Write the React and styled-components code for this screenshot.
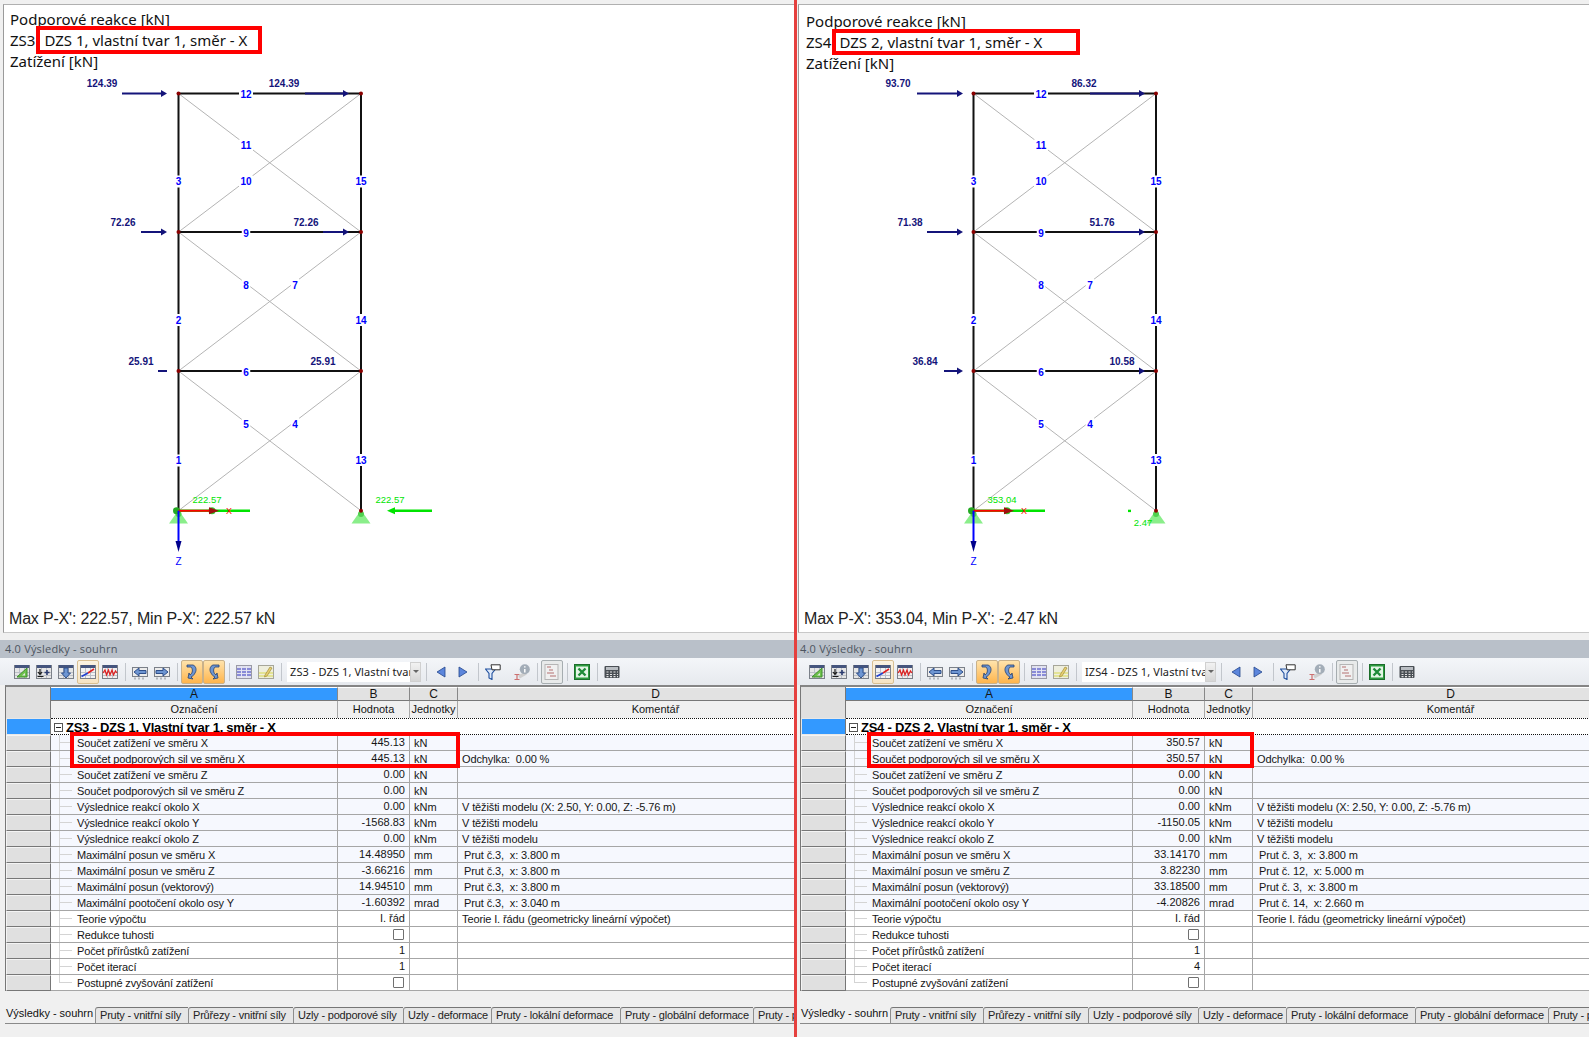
import React from 'react';
import styled, { createGlobalStyle } from 'styled-components';

const Global = createGlobalStyle`
  html, body { margin: 0; padding: 0; background: #f0f0f0; }
  body { font-family: "Liberation Sans", Arial, sans-serif; color: #111; }
`;

const Page = styled.div`
  display: flex; width: 1589px; height: 1037px; overflow: hidden; background: #f0f0f0;
`;
const Panel = styled.section`
  position: relative; flex: none; width: 795px; height: 1037px; display: flex; flex-direction: column;
  background: #f0f0f0; overflow: visible;
`;
const PanelClip = styled.div`
  width: 100%; height: 100%; overflow: hidden; display: flex; flex-direction: column;
`;
const Divider = styled.div`
  position: absolute; left: -1px; top: 0; bottom: 0; width: 3px; background: #e5403e; z-index: 5;
`;
const Highlight = styled.div`
  position: absolute; box-sizing: border-box; border: 4px solid #ff0000; z-index: 4;
  left: ${p => p.$x}px; top: ${p => p.$y}px; width: ${p => p.$w}px; height: ${p => p.$h}px;
`;
const Viewport = styled.div`
  flex: none; box-sizing: border-box; height: 629px; margin: 4px 0 0 3px;
  background: #fff; border-left: 1px solid #9a9a9a; border-top: 1px solid #b0b0b0; border-bottom: 1px solid #c8c8c8;
  display: flex; flex-direction: column;
`;
const Heading = styled.div`
  flex: none; height: 69px; box-sizing: border-box; padding: ${p => p.$top}px 0 0 ${p => p.$left}px;
  font: 15px/21px "Noto Sans", "Open Sans", sans-serif; color: #111;
`;
const HeadingLine = styled.div`
  white-space: nowrap; display: flex; gap: ${p => p.$gap || 0}px;
`;
const Chart = styled.svg`
  display: block; flex: none; width: 791px; height: 530px;
`;
const Footnote = styled.div`
  flex: 1; padding-left: 5px; font: 16px/29px "Liberation Sans", Arial, sans-serif; color: #222;
  white-space: nowrap; letter-spacing: -0.18px;
`;
const TitleBar = styled.div`
  flex: none; height: 18px; margin-top: 7px; background: #b9c0c9; padding-left: 5px;
  font: 11px/18px "Open Sans", "Noto Sans", sans-serif; color: #4d5560; letter-spacing: 0.2px;
`;
const Toolbar = styled.div`
  flex: none; height: 27px; box-sizing: border-box; padding-left: 11px; display: flex; align-items: center;
  background: linear-gradient(#f4f6f9, #e6e9ee);
`;
const ToolButton = styled.div`
  flex: none; width: 22px; height: 24px; box-sizing: border-box; display: flex; align-items: center; justify-content: center;
  border-radius: 2px; margin-left: ${p => p.$gap || 0}px;
  ${p => p.$mode === 'active' && `background: linear-gradient(#ffe3ac, #ffb54c); border: 1px solid #c9b18a;`}
  ${p => p.$mode === 'soft' && `background: linear-gradient(#fbf3e2, #f6e4c4); border: 1px solid #d8bf92;`}
  ${p => p.$mode === 'pressed' && `background: #e8eaea; border: 1px solid #a6adb0;`}
  svg { display: block; }
`;
const ToolSep = styled.div`
  flex: none; width: 8px; height: 18px; display: flex; justify-content: center;
  &::before { content: ""; width: 1px; background: #c2c6cc; }
`;
const Combo = styled.div`
  flex: none; width: 134px; height: 20px; box-sizing: border-box; margin: 0 1px 0 2px; display: flex; background: #fff;
  font: 11px/20px "Noto Sans", "Open Sans", sans-serif; letter-spacing: 0.1px; color: #222;
`;
const ComboText = styled.div`
  flex: 1; overflow: hidden; white-space: nowrap; padding-left: 3px;
`;
const ComboArrow = styled.div`
  flex: none; width: 11px; display: flex; align-items: center; justify-content: center;
  background: linear-gradient(#f2f2f2, #d6d6d6); border: 1px solid #d0d0d0; box-sizing: border-box;
  &::after { content: ""; border-left: 3px solid transparent; border-right: 3px solid transparent; border-top: 3px solid #666; }
`;

const columns = '45px 287px 72px 48px 396px';
const Table = styled.div`
  flex: none; width: 849px; margin-left: 5px; border-left: 1px solid #777; border-top: 2px solid #858585;
  background: #fff; font: 11px/15px "Liberation Sans", Arial, sans-serif; color: #151515;
`;
const HeadGrid = styled.div`
  display: grid; grid-template-columns: ${columns}; grid-template-rows: 14px 17px; background: #f0f0f0;
`;
const Corner = styled.div`
  grid-row: span 2; background: #e0e0e0; border-right: 1px solid #777; box-sizing: border-box;
`;
const ColLetter = styled.div`
  box-sizing: border-box; text-align: center; font-size: 12px; line-height: 13px; height: 14px;
  background: ${p => (p.$selected ? '#3399ff' : '#e2e2e2')};
  border-right: 1px solid #888; border-bottom: 1px solid #777; border-top: 1px solid #fff;
`;
const ColName = styled.div`
  box-sizing: border-box; text-align: center; line-height: 16px; background: #f0f0f0; white-space: nowrap; overflow: hidden;
  border-right: 1px solid #a8a8a8;
`;
const GroupRow = styled.div`
  display: grid; grid-template-columns: 45px 1fr; height: 17px; background: #fff;
`;
const GroupHead = styled.div`
  background: #3399ff; border: 1px solid #e8e8e8; border-right: 1px solid #777; box-sizing: border-box;
`;
const GroupBody = styled.div`
  display: flex; align-items: center; gap: 3px; padding: 1px 0 0 3px; box-sizing: border-box;
  border-top: 1px dotted #111; border-bottom: 1px dotted #111; letter-spacing: -0.25px;
  font: bold 13px/15px "Liberation Sans", Arial, sans-serif; white-space: nowrap; color: #000; overflow: hidden;
`;
const Minus = styled.span`
  flex: none; width: 9px; height: 9px; border: 1px solid #555; box-sizing: border-box; background: #fff; display: flex; align-items: center; justify-content: center;
  &::before { content: ""; width: 5px; height: 1px; background: #222; }
`;
const Row = styled.div`
  display: grid; grid-template-columns: ${columns}; height: 16px; box-sizing: border-box;
  background: ${p => (p.$tint ? '#f6f8fe' : '#fff')}; border-bottom: 1px solid #a6a6a6; white-space: pre;
`;
const RowHead = styled.div`
  background: #e0e0e0; border-top: 1px solid #f4f4f4; border-right: 1px solid #777; border-left: 1px solid #f4f4f4;
  border-bottom: 1px solid #777; box-sizing: border-box; height: 16px;
`;
const NameCell = styled.div`
  display: flex; border-right: 1px solid #a6a6a6; overflow: hidden; line-height: 16px; letter-spacing: -0.14px;
`;
const TreeGuide = styled.span`
  flex: none; width: 13px; margin: 0 5px 0 8px; height: 15px;
  background:
    linear-gradient(#d4d4d4, #d4d4d4) left top / 1px ${p => (p.$last ? '8px' : '100%')} no-repeat,
    linear-gradient(#d4d4d4, #d4d4d4) left 7px / 100% 1px no-repeat;
`;
const ValueCell = styled.div`
  display: flex; align-items: center; justify-content: flex-end; padding-right: 4px; border-right: 1px solid #a6a6a6; height: 15px;
`;
const UnitCell = styled.div`
  padding-left: 4px; border-right: 1px solid #a6a6a6; height: 15px; line-height: 16px;
`;
const NoteCell = styled.div`
  padding-left: ${p => p.$indent}px; overflow: hidden; line-height: 16px; letter-spacing: -0.12px;
`;
const Check = styled.span`
  width: 11px; height: 11px; box-sizing: border-box; border: 1px solid #707070; background: #fff; border-radius: 1px; margin-right: 1px;
`;
const TabStrip = styled.div`
  flex: none; margin: 14px 0 0 5px; height: 19px; display: flex; align-items: flex-end; white-space: nowrap; overflow: hidden;
`;
const Tab = styled.div`
  flex: none; box-sizing: border-box; width: ${p => p.$w}px; overflow: hidden; text-align: left;
  font: 11px/15px "Liberation Sans", Arial, sans-serif; letter-spacing: -0.2px; color: #222;
  ${p => p.$active
    ? `height: 19px; background: #f0f0f0; border-bottom: 1px solid #8a8a8a; padding: 0 0 0 1px; line-height: 16px; color:#111; letter-spacing: -0.02px;`
    : `height: 17px; background: #e6e6e6; border-top: 1px solid #777; border-left: 1px solid #8d8d8d; border-bottom: 1px solid #8a8a8a; padding-left: 4px; border-top-left-radius: 3px;`}
`;

const Sheet = ({ bg = '#e6e6e6', children }) => (
  <>
    <rect x="0.5" y="1.5" width="15" height="13" fill={bg} stroke="#7b8089" />
    <rect x="1" y="1" width="14" height="3" fill="#45557e" />
    <path d="M1 8.5h14M1 11.5h14M5.5 4v10M10.5 4v10" stroke="#bcc0c8" strokeWidth="1" fill="none" />
    {children}
  </>
);

const icons = {
  triangle: <Sheet><path d="M3 13 13 4v9z" fill="#6fc24c" stroke="#3f8f2c" /><path d="M8 11.5h3V9z" fill="#e6e6e6" /></Sheet>,
  insert: <Sheet><path d="M4 5v5M2 8l2 2.5L6 8" stroke="#1a1a1a" fill="none" strokeWidth="1.2" /><path d="M1.5 12.5h6" stroke="#1a1a1a" /><path d="M11 6v5M8.5 8.5h5" stroke="#2c3c70" strokeWidth="1.6" /></Sheet>,
  down: <Sheet><path d="M6 4h4v5h2.5L8 14 3.5 9H6z" fill="#6d95d2" stroke="#2f4f8a" /></Sheet>,
  ramp: <Sheet bg="#f2f2f2"><path d="M1.5 12.5 8 9" stroke="#2040d0" strokeWidth="1.6" /><path d="M8 9l6-4" stroke="#e02020" strokeWidth="1.6" /></Sheet>,
  wave: <Sheet bg="#f2eeee"><path d="M1 9l2-3 1.5 5L6.5 6 8 11l2-5 1.5 5 2-4 1.5 2" stroke="#e02020" fill="none" strokeWidth="1.2" /></Sheet>,
  left: <><rect x="0.5" y="3.5" width="15" height="9" fill="#ececec" stroke="#7b8089" /><path d="M3 13.5v2M7 13.5v2M11 13.5v2" stroke="#7b8089" /><path d="M2 8l5-4v2.5h7v3H7V12z" fill="#6d95d2" stroke="#2f4f8a" /></>,
  right: <><rect x="0.5" y="3.5" width="15" height="9" fill="#ececec" stroke="#7b8089" /><path d="M3 13.5v2M7 13.5v2M11 13.5v2" stroke="#7b8089" /><path d="M14 8 9 4v2.5H2v3h7V12z" fill="#6d95d2" stroke="#2f4f8a" /></>,
  curveL: <><path d="M3 1h6c3 1 4 5 2 8-1 2-2 3-4 4l2 2-5-1 1-5 1 2c3-2 3-6 1-8H3z" fill="#6d95d2" stroke="#26406f" strokeWidth="0.8" /></>,
  curveR: <><path d="M13 1H7C4 2 3 6 5 9c1 2 2 3 4 4l-2 2 5-1-1-5-1 2C7 9 7 5 9 3h4z" fill="#6d95d2" stroke="#26406f" strokeWidth="0.8" /></>,
  grid: <><rect x="0.5" y="1.5" width="15" height="13" fill="#dfe0ee" stroke="#9a9aa6" /><path d="M1 5h14M1 8h14M1 11h14" stroke="#6d6fd0" strokeWidth="1.4" /><path d="M5.5 2v12M10.5 2v12" stroke="#e6e6f4" /></>,
  pencil: <><rect x="0.5" y="1.5" width="15" height="13" fill="#eeeedd" stroke="#a6a69a" /><path d="M1 9h14M1 12h14" stroke="#dfdf7f" strokeWidth="1.6" /><path d="M7 11l5-8 2 1-5 8-2.5 1z" fill="#e8cf70" stroke="#a08c3c" strokeWidth="0.7" /></>,
  prev: <path d="M4 8l8-5v10z" fill="#5c86dc" stroke="#24468c" strokeWidth="0.8" />,
  next: <path d="M12 8 4 3v10z" fill="#5c86dc" stroke="#24468c" strokeWidth="0.8" />,
  filter: <><path d="M0.5 5h10L7 9.5V15.5l-3-1.5V9.5z" fill="#dfeafa" stroke="#1f4f9e" strokeWidth="1.1" /><path d="M6 0.8h9.2v5H7z" fill="#fff" stroke="#333" /></>,
  info: <><path d="M0.5 10.5h5M3 10.5v5M0.5 15.5h5" stroke="#cc7070" strokeWidth="1.2" /><path d="M5 13l7-4" stroke="#cfcfcf" strokeWidth="3.4" /><circle cx="10.8" cy="5.2" r="5" fill="#a3adb8" /><path d="M10.8 2.2v1.4M10.8 5v3.6" stroke="#fff" strokeWidth="1.5" /></>,
  gantt: <><rect x="1" y="0.5" width="13" height="15" fill="#f0f0f0" stroke="#b5b5b5" /><path d="M3 3h4M5 6h4M3 9h7M6 12h6" stroke="#c79a9a" strokeWidth="1.6" /></>,
  excel: <><rect x="0.5" y="0.5" width="15" height="15" fill="#2c9a3f" stroke="#1c6d2b" /><rect x="2" y="2.5" width="12" height="11" fill="#e4f5e6" /><path d="M4.5 4.5l7 7M11.5 4.5l-7 7" stroke="#1f8a38" strokeWidth="2.4" /></>,
  calc: <><rect x="0.5" y="2" width="15" height="12" rx="1" fill="#4a4f55" /><rect x="2" y="3" width="12" height="3" fill="#b9bdc2" /><path d="M2.5 8h2M6 8h2M9.5 8h2M13 8h1M2.5 10.5h2M6 10.5h2M9.5 10.5h2M13 10.5h1M2.5 12.6h2M6 12.6h2M9.5 12.6h2M13 12.6h1" stroke="#e4e4e4" strokeWidth="1.2" /></>,
};

const Icon = ({ name, size = 16 }) => <svg width={size} height={size} viewBox="0 0 16 16">{icons[name]}</svg>;

const tool = (name, mode, gap) => (
  <ToolButton key={name} $mode={mode} $gap={gap}><Icon name={name} /></ToolButton>
);

const ResultToolbar = ({ combo }) => (
  <Toolbar>
    {tool('triangle')}{tool('insert')}{tool('down')}{tool('ramp', 'soft')}{tool('wave')}
    <ToolSep />
    {tool('left')}{tool('right')}
    <ToolSep />
    {tool('curveL', 'active')}{tool('curveR', 'active')}
    <ToolSep />
    {tool('grid')}{tool('pencil')}
    <ToolSep />
    <Combo><ComboText>{combo}</ComboText><ComboArrow /></Combo>
    <ToolSep />
    {tool('prev')}{tool('next')}
    <ToolSep />
    {tool('filter')}{tool('info', undefined, 7)}
    <ToolSep />
    {tool('gantt', 'pressed')}
    <ToolSep />
    {tool('excel')}
    <ToolSep />
    {tool('calc')}
  </Toolbar>
);

/* ---------- structure drawing ---------- */
const XL = 178.5, XR = 361, YS = [93.5, 232, 371, 510.7];
const BLUE_LABELS = [
  ['12', 246, 94], ['11', 246, 145.5], ['10', 246, 181.5], ['3', XL, 181.5], ['15', XR, 181.5],
  ['9', 246, 233], ['8', 246, 285], ['7', 295, 285], ['2', XL, 320], ['14', XR, 320],
  ['6', 246, 372], ['5', 246, 424], ['4', 295, 424], ['1', XL, 460.5], ['13', XR, 460],
];
const NAVY = '#14147a';
const GREEN = '#00e400';

const Arrow = ({ x1, x2, y, color, w = 2, head = 6 }) => {
  const dir = x2 > x1 ? 1 : -1;
  return (
    <g>
      <line x1={x1} y1={y} x2={x2 - dir * head} y2={y} stroke={color} strokeWidth={w} />
      <path d={`M${x2} ${y} L${x2 - dir * head} ${y - 3.5} L${x2 - dir * head} ${y + 3.5} Z`} fill={color} />
    </g>
  );
};

const MemberLabel = ({ t, x, y }) => {
  const w = t.length * 5.5 + 3;
  return (
    <g>
      <rect x={x - w / 2} y={y - 6} width={w} height={12} fill="#fff" />
      <text x={x} y={y + 3.6} textAnchor="middle" fontFamily="Liberation Sans" fontWeight="700" fontSize="10" fill="#0000ff">{t}</text>
    </g>
  );
};

const Load = ({ t, x, y }) => (
  <text x={x} y={y + 3.5} textAnchor="middle" fontFamily="Liberation Sans" fontWeight="700" fontSize="10" fill={NAVY}>{t}</text>
);
const React2 = ({ t, x, y }) => (
  <text x={x} y={y + 3.3} textAnchor="middle" fontFamily="Liberation Sans" fontSize="9.5" fill={GREEN}>{t}</text>
);

const Support = ({ x }) => (
  <g>
    <path d={`M${x} 510 L${x + 9.5} 523.5 L${x - 9.5} 523.5 Z`} fill="#8aee8a" />
    <circle cx={x} cy="514" r="3" fill="#4fd14f" />
  </g>
);

const Structure = ({ d }) => (
  <Chart viewBox="4 74 791 530">
    {[0, 1, 2].map(i => (
      <g key={i} stroke="#b4b4b4" strokeWidth="1">
        <line x1={XL} y1={YS[i]} x2={XR} y2={YS[i + 1]} />
        <line x1={XR} y1={YS[i]} x2={XL} y2={YS[i + 1]} />
      </g>
    ))}
    <g stroke="#111" strokeWidth="2">
      <line x1={XL} y1={YS[0]} x2={XL} y2={YS[3]} />
      <line x1={XR} y1={YS[0]} x2={XR} y2={YS[3]} />
      <line x1={XL} y1={YS[0]} x2={XR} y2={YS[0]} />
      <line x1={XL} y1={YS[1]} x2={XR} y2={YS[1]} />
      <line x1={XL} y1={YS[2]} x2={XR} y2={YS[2]} />
    </g>
    {d.arrows.map((a, i) => <Arrow key={i} {...a} color={NAVY} />)}
    {d.dash && <line x1="158" x2="167" y1={YS[2]} y2={YS[2]} stroke={NAVY} strokeWidth="2" />}
    {BLUE_LABELS.map(([t, x, y]) => <MemberLabel key={t} t={t} x={x} y={y} />)}
    {d.loads.map((l, i) => <Load key={i} {...l} />)}
    <Support x={XL} />
    <Support x={XR} />
    <line x1={XL} x2="250" y1={YS[3]} y2={YS[3]} stroke={GREEN} strokeWidth="2.4" />
    <circle cx="212" cy={YS[3]} r="3.5" fill="#33cc33" />
    <circle cx={XL - 2} cy={YS[3]} r="3.5" fill="#22aa22" />
    <line x1={XL} x2="212" y1={YS[3]} y2={YS[3]} stroke="#ff0000" strokeWidth="2" />
    <path d={`M219 ${YS[3]} L209 ${YS[3] - 3.5} L209 ${YS[3] + 3.5} Z`} fill="#a01010" />
    <text x="229" y={YS[3] + 3.6} textAnchor="middle" fontFamily="Liberation Sans" fontSize="9" fill="#ff0000">X</text>
    <line x1={XL} x2={XL} y1={YS[3]} y2="545" stroke="#0000ff" strokeWidth="2" />
    <path d={`M${XL} 552 L${XL - 3} 541 L${XL + 3} 541 Z`} fill="#00008b" />
    <text x={XL} y="565" textAnchor="middle" fontFamily="Liberation Sans" fontSize="10" fill="#0000ff">Z</text>
    <circle cx={XL} cy={YS[0]} r="2" fill="#8b0000" />
    {[[XR, YS[0]], [XL, YS[1]], [XR, YS[1]], [XL, YS[2]], [XR, YS[2]], [XR, YS[3]]].map(([x, y], i) => <circle key={i} cx={x} cy={y} r="2" fill="#8b0000" />)}
    {d.reactions.map((r, i) => <React2 key={i} {...r} />)}
    {d.reactionArrow && <Arrow x1={432} x2={387} y={YS[3]} color={GREEN} w={2.6} head={8} />}
    {d.reactionDot && <rect x="333" y={YS[3] - 1} width="3" height="2.4" fill={GREEN} />}
  </Chart>
);

/* ---------- data ---------- */
const LABELS = [
  'Součet zatížení ve směru X', 'Součet podporových sil ve směru X', 'Součet zatížení ve směru Z', 'Součet podporových sil ve směru Z',
  'Výslednice reakcí okolo X', 'Výslednice reakcí okolo Y', 'Výslednice reakcí okolo Z',
  'Maximální posun ve směru X', 'Maximální posun ve směru Z', 'Maximální posun (vektorový)', 'Maximální pootočení okolo osy Y',
  'Teorie výpočtu', 'Redukce tuhosti', 'Počet přírůstků zatížení', 'Počet iterací', 'Postupné zvyšování zatížení',
];
const UNITS = ['kN', 'kN', 'kN', 'kN', 'kNm', 'kNm', 'kNm', 'mm', 'mm', 'mm', 'mrad', '', '', '', '', ''];
const TABS = [
  ['Výsledky - souhrn', 90], ['Pruty - vnitřní síly', 93], ['Průřezy - vnitřní síly', 105], ['Uzly - podporové síly', 110],
  ['Uzly - deformace', 88], ['Pruty - lokální deformace', 129], ['Pruty - globální deformace', 133], ['Pruty - průřezy', 60],
];

const notes = (s) => [
  '', 'Odchylka:  0.00 %', '', '', 'V těžišti modelu (X: 2.50, Y: 0.00, Z: -5.76 m)', 'V těžišti modelu', 'V těžišti modelu',
  ...s, 'Teorie I. řádu (geometricky lineární výpočet)', '', '', '', '',
];

const LEFT = {
  heading: 'ZS3', title: 'DZS 1, vlastní tvar 1, směr - X', top: 4, left: 6, gap: 9,
  footnote: "Max P-X': 222.57, Min P-X': 222.57 kN",
  combo: 'ZS3 - DZS 1, Vlastní tvar 1, směr - X',
  group: 'ZS3 - DZS 1, Vlastní tvar 1, směr - X',
  values: ['445.13', '445.13', '0.00', '0.00', '0.00', '-1568.83', '0.00', '14.48950', '-3.66216', '14.94510', '-1.60392', 'I. řád', null, '1', '1', null],
  notes: notes(['Prut č.3,  x: 3.800 m', 'Prut č.3,  x: 3.800 m', 'Prut č.3,  x: 3.800 m', 'Prut č.3,  x: 3.040 m']),
  titleBox: { $x: 36, $y: 26, $w: 226, $h: 28 },
  tableBox: { $x: 70, $y: 732, $w: 390, $h: 36 },
  chart: {
    dash: true, reactionArrow: true,
    arrows: [{ x1: 122, x2: 167, y: YS[0] }, { x1: 305, x2: 349, y: YS[0] }, { x1: 141, x2: 167, y: YS[1] }, { x1: 323, x2: 349, y: YS[1] }],
    loads: [
      { t: '124.39', x: 102, y: 83 }, { t: '124.39', x: 284, y: 83 }, { t: '72.26', x: 123, y: 222 },
      { t: '72.26', x: 306, y: 222 }, { t: '25.91', x: 141, y: 361 }, { t: '25.91', x: 323, y: 361 },
    ],
    reactions: [{ t: '222.57', x: 207, y: 499.5 }, { t: '222.57', x: 390, y: 499.5 }],
  },
};
const RIGHT = {
  heading: 'ZS4', title: 'DZS 2, vlastní tvar 1, směr - X', top: 6, left: 7, gap: 8,
  footnote: "Max P-X': 353.04, Min P-X': -2.47 kN",
  combo: 'IZS4 - DZS 1, Vlastní tvar 1, směr - X',
  group: 'ZS4 - DZS 2, Vlastní tvar 1, směr - X',
  values: ['350.57', '350.57', '0.00', '0.00', '0.00', '-1150.05', '0.00', '33.14170', '3.82230', '33.18500', '-4.20826', 'I. řád', null, '1', '4', null],
  notes: notes(['Prut č. 3,  x: 3.800 m', 'Prut č. 12,  x: 5.000 m', 'Prut č. 3,  x: 3.800 m', 'Prut č. 14,  x: 2.660 m']),
  titleBox: { $x: 37, $y: 29, $w: 248, $h: 26 },
  tableBox: { $x: 72, $y: 732, $w: 387, $h: 36 },
  chart: {
    reactionDot: true,
    arrows: [
      { x1: 122, x2: 168, y: YS[0] }, { x1: 295, x2: 350, y: YS[0] }, { x1: 132, x2: 168, y: YS[1] },
      { x1: 315, x2: 350, y: YS[1] }, { x1: 149, x2: 168, y: YS[2] }, { x1: 344, x2: 350, y: YS[2] },
    ],
    loads: [
      { t: '93.70', x: 103, y: 83 }, { t: '86.32', x: 289, y: 83 }, { t: '71.38', x: 115, y: 222 },
      { t: '51.76', x: 307, y: 222 }, { t: '36.84', x: 130, y: 361 }, { t: '10.58', x: 327, y: 361 },
    ],
    reactions: [{ t: '353.04', x: 207, y: 499.5 }, { t: '2.47', x: 348, y: 522.7 }],
  },
};

const ResultPanel = ({ d, second }) => (
  <Panel>
    {second && <Divider />}
    <Highlight {...d.titleBox} />
    <Highlight {...d.tableBox} />
    <PanelClip>
      <Viewport>
        <Heading $top={d.top} $left={d.left}>
          <HeadingLine>Podporové reakce [kN]</HeadingLine>
          <HeadingLine $gap={d.gap}><span>{d.heading}</span><span>{d.title}</span></HeadingLine>
          <HeadingLine>Zatížení [kN]</HeadingLine>
        </Heading>
        <Structure d={d.chart} />
        <Footnote>{d.footnote}</Footnote>
      </Viewport>
      <TitleBar>4.0 Výsledky - souhrn</TitleBar>
      <ResultToolbar combo={d.combo} />
      <Table>
        <HeadGrid>
          <Corner />
          <ColLetter $selected>A</ColLetter>
          <ColLetter>B</ColLetter>
          <ColLetter>C</ColLetter>
          <ColLetter>D</ColLetter>
          <ColName>Označení</ColName>
          <ColName>Hodnota</ColName>
          <ColName>Jednotky</ColName>
          <ColName>Komentář</ColName>
        </HeadGrid>
        <GroupRow>
          <GroupHead />
          <GroupBody><Minus />{d.group}</GroupBody>
        </GroupRow>
        {LABELS.map((label, i) => (
          <Row key={label} $tint={i < 11}>
            <RowHead />
            <NameCell><TreeGuide $last={i === LABELS.length - 1} />{label}</NameCell>
            <ValueCell>{d.values[i] === null ? <Check /> : d.values[i]}</ValueCell>
            <UnitCell>{UNITS[i]}</UnitCell>
            <NoteCell $indent={i >= 7 && i <= 10 ? 6 : 4}>{d.notes[i]}</NoteCell>
          </Row>
        ))}
      </Table>
      <TabStrip>
        {TABS.map(([t, w], i) => <Tab key={t} $w={w} $active={i === 0}>{t}</Tab>)}
      </TabStrip>
    </PanelClip>
  </Panel>
);

export default function App() {
  return (
    <Page>
      <Global />
      <ResultPanel d={LEFT} />
      <ResultPanel d={RIGHT} second />
    </Page>
  );
}
